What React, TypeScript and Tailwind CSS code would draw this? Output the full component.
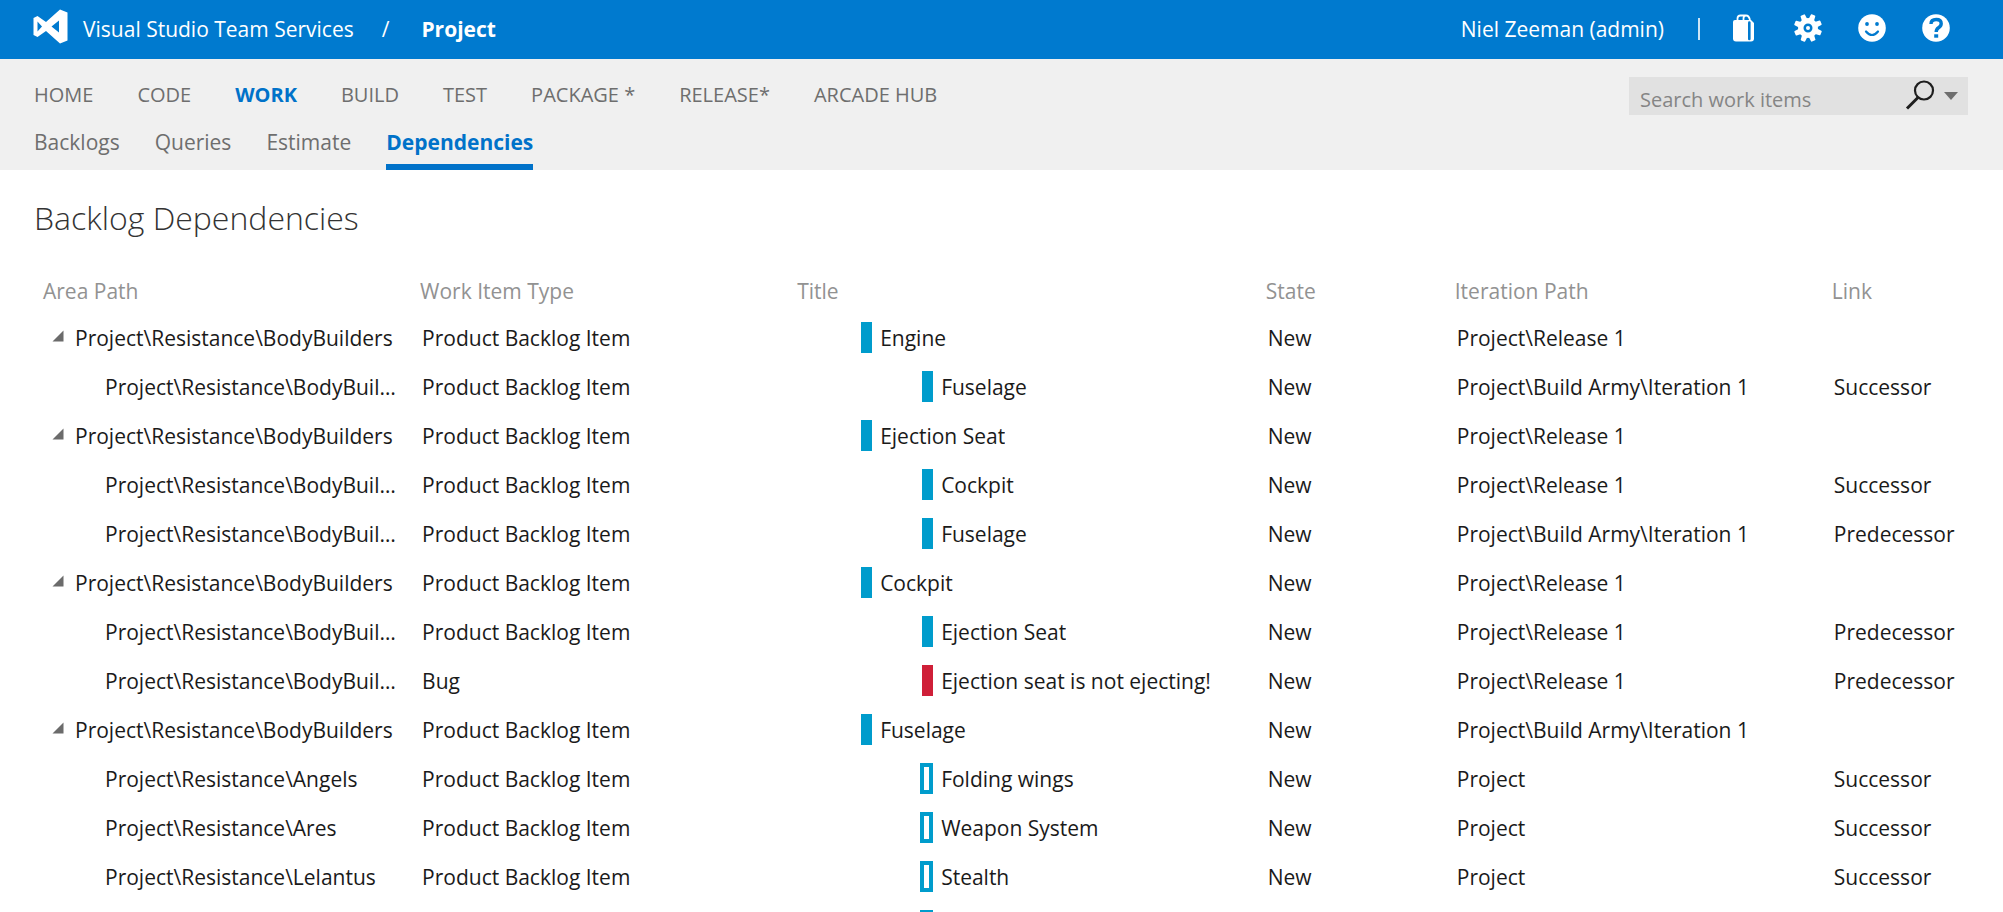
import { useState } from "react";

type Item = {
  area: string;
  type: string;
  title: string;
  iteration: string;
  link?: string;
  marker: "solid" | "bug" | "hollow";
};

type Group = Item & { children: Item[] };

const BODY = "Project\\Resistance\\BodyBuilders";
const PBI = "Product Backlog Item";
const RELEASE = "Project\\Release 1";
const ARMY = "Project\\Build Army\\Iteration 1";

const groups: Group[] = [
  {
    area: BODY, type: PBI, title: "Engine", iteration: RELEASE, marker: "solid",
    children: [
      { area: BODY, type: PBI, title: "Fuselage", iteration: ARMY, link: "Successor", marker: "solid" },
    ],
  },
  {
    area: BODY, type: PBI, title: "Ejection Seat", iteration: RELEASE, marker: "solid",
    children: [
      { area: BODY, type: PBI, title: "Cockpit", iteration: RELEASE, link: "Successor", marker: "solid" },
      { area: BODY, type: PBI, title: "Fuselage", iteration: ARMY, link: "Predecessor", marker: "solid" },
    ],
  },
  {
    area: BODY, type: PBI, title: "Cockpit", iteration: RELEASE, marker: "solid",
    children: [
      { area: BODY, type: PBI, title: "Ejection Seat", iteration: RELEASE, link: "Predecessor", marker: "solid" },
      { area: BODY, type: "Bug", title: "Ejection seat is not ejecting!", iteration: RELEASE, link: "Predecessor", marker: "bug" },
    ],
  },
  {
    area: BODY, type: PBI, title: "Fuselage", iteration: ARMY, marker: "solid",
    children: [
      { area: "Project\\Resistance\\Angels", type: PBI, title: "Folding wings", iteration: "Project", link: "Successor", marker: "hollow" },
      { area: "Project\\Resistance\\Ares", type: PBI, title: "Weapon System", iteration: "Project", link: "Successor", marker: "hollow" },
      { area: "Project\\Resistance\\Lelantus", type: PBI, title: "Stealth", iteration: "Project", link: "Successor", marker: "hollow" },
    ],
  },
];

const hubs = ["HOME", "CODE", "WORK", "BUILD", "TEST", "PACKAGE *", "RELEASE*", "ARCADE HUB"];
const pages = ["Backlogs", "Queries", "Estimate", "Dependencies"];

const markerStyles = {
  solid: "ml-[2px] w-[11px] bg-[#009ccc]",
  bug: "ml-[2px] w-[11px] bg-[#cf1f38]",
  hollow: "w-[13px] border-4 border-[#009ccc]",
};

function Marker({ kind }: { kind: Item["marker"] }) {
  return <span className={`block h-[31px] shrink-0 ${markerStyles[kind]}`} />;
}

function Logo() {
  return (
    <svg viewBox="0 0 35 35" className="h-[35px] w-[35px]" fill="currentColor" aria-hidden="true">
      <path
        fillRule="evenodd"
        d="M27 .5 34.5 3.5V31.500L27 34.500 13 22 4.500 28 .5 26V9L4.500 7 13 13 27 .5ZM26 11.500 18.500 17.500 26 23.500ZM4.500 12.500V22.500L9 17.500Z"
      />
    </svg>
  );
}

function BagIcon() {
  return (
    <svg viewBox="0 0 30 30" className="h-[30px] w-[30px]" aria-hidden="true">
      <path d="M8.500 8V5.500Q8.500 2.500 11.500 2.500H17Q20 2.500 21 7M14.500 8V5.500Q14.500 2.500 17 2.500" fill="none" stroke="currentColor" strokeWidth="1.800" />
      <path d="M6 7H22L25 10V25.500Q25 28.500 22 28.500H7Q4 28.500 4 25.500V9Q4 7 6 7Z" fill="currentColor" />
      <path d="M20.300 9.500V26" stroke="#007acf" strokeWidth="2.600" strokeLinecap="round" />
    </svg>
  );
}

function GearIcon() {
  return (
    <svg viewBox="0 0 30 30" className="h-[30px] w-[30px]" fill="currentColor" aria-hidden="true">
      {[22, 67, 112, 157, 202, 247, 292, 337].map((angle) => (
        <path key={angle} d="M12 8 12.600 1.600Q12.700 .9 13.400 .9H16.600Q17.300 .9 17.400 1.600L18 8Z" transform={`rotate(${angle} 15 15)`} />
      ))}
      <path fillRule="evenodd" d="M15 5A10 10 0 1 0 15 25A10 10 0 1 0 15 5ZM15 10.500A4.500 4.500 0 1 1 15 19.500A4.500 4.500 0 1 1 15 10.500Z" />
      <circle cx="15" cy="15" r="2" />
    </svg>
  );
}

function SmileIcon() {
  return (
    <svg viewBox="0 0 30 30" className="h-[30px] w-[30px]" aria-hidden="true">
      <circle cx="15" cy="15" r="13.800" fill="currentColor" />
      <circle cx="10" cy="11" r="1.900" fill="#007acf" />
      <circle cx="20" cy="11" r="1.900" fill="#007acf" />
      <path d="M9 18.500Q15 25.500 21 18.500" fill="none" stroke="#007acf" strokeWidth="2.200" strokeLinecap="round" />
    </svg>
  );
}

function HelpIcon() {
  return (
    <svg viewBox="0 0 30 30" className="h-[30px] w-[30px]" aria-hidden="true">
      <circle cx="15" cy="15" r="13.800" fill="currentColor" />
      <path d="M10 11Q10 6.500 15.200 6.500Q20.200 6.500 20.200 10.500Q20.200 13 17.500 14.700Q15.200 16.200 15.200 19" fill="none" stroke="#007acf" strokeWidth="3.400" />
      <rect x="13.200" y="21.300" width="4" height="3.400" fill="#007acf" />
    </svg>
  );
}

function ItemRow({ item, child, open, onToggle }: { item: Item; child?: boolean; open?: boolean; onToggle?: () => void }) {
  return (
    <tr className="h-[49px]">
      <td className="p-0">
        <div className={`flex items-center ${child ? "pl-[71px] pr-[5px]" : "pl-[17px]"}`}>
          {!child && (
            <button type="button" aria-label="Toggle dependencies" aria-expanded={open} onClick={onToggle} className="mr-[10px] flex h-[30px] w-[14px] shrink-0 items-center justify-center pb-1">
              <svg viewBox="0 0 12 12" className={open ? "h-3 w-3" : "h-3 w-3 -rotate-45"} aria-hidden="true">
                <path d="M11.500 .5V11.500H.5Z" fill="#6b6b6b" />
              </svg>
            </button>
          )}
          <span className="truncate">{item.area}</span>
        </div>
      </td>
      <td className="truncate p-0 pl-[11px]">{item.type}</td>
      <td className="p-0">
        <div className={`flex items-center ${child ? "pl-[132px]" : "pl-[71px]"}`}>
          <Marker kind={item.marker} />
          <span className="truncate pl-2">{item.title}</span>
        </div>
      </td>
      <td className="p-0 pl-[11px]">New</td>
      <td className="truncate p-0 pl-[11px]">{item.iteration}</td>
      <td className="truncate p-0 pl-[11px]">{item.link}</td>
    </tr>
  );
}

export default function App() {
  const [closed, setClosed] = useState<number[]>([]);
  const toggle = (index: number) =>
    setClosed((list) => (list.includes(index) ? list.filter((n) => n !== index) : [...list, index]));

  return (
    <div className="h-screen overflow-hidden bg-white font-['Open_Sans','Noto_Sans',sans-serif] text-[21px] leading-[30px] text-[#1a1a1a]">
      <header className="flex h-[59px] items-center justify-between bg-[#007acf] pb-[2px] pl-[33px] pr-[52px] text-white">
        <div className="flex items-center">
          <a href="#" aria-label="Start page" className="pb-1"><Logo /></a>
          <a href="#" className="ml-[15px]">Visual Studio Team Services</a>
          <span className="ml-7 mr-8">/</span>
          <a href="#" className="font-bold">Project</a>
        </div>
        <div className="flex items-center">
          <a href="#">Niel Zeeman (admin)</a>
          <span className="ml-[34px] mr-[29px] h-[22px] w-[2px] bg-white/80" />
          <div className="flex items-center gap-[34px] pb-[2px]">
            <button type="button" aria-label="Marketplace"><BagIcon /></button>
            <button type="button" aria-label="Settings"><GearIcon /></button>
            <button type="button" aria-label="Feedback"><SmileIcon /></button>
            <button type="button" aria-label="Help"><HelpIcon /></button>
          </div>
        </div>
      </header>

      <div className="flex h-[111px] items-start justify-between bg-[#f0f0f0] pl-[34px] pr-[35px] text-[#6e6e6e]">
        <div>
          <nav aria-label="Hubs" className="flex gap-[44px] pt-[21px] text-[20px]">
            {hubs.map((hub) => (
              <a key={hub} href="#" className={hub === "WORK" ? "font-bold text-[#0072c9]" : ""}>{hub}</a>
            ))}
          </nav>
          <nav aria-label="Work pages" className="flex gap-[35px] pt-[17px]">
            {pages.map((page) => (
              <a
                key={page}
                href="#"
                className={`h-[43px] ${page === "Dependencies" ? "border-b-[6px] border-[#0072c9] font-bold text-[#0072c9]" : ""}`}
              >
                {page}
              </a>
            ))}
          </nav>
        </div>
        <form role="search" onSubmit={(event) => event.preventDefault()} className="mt-[18px] flex h-[38px] w-[339px] items-center bg-[#e1e1e1]">
          <input type="text" aria-label="Search work items" placeholder="Search work items" className="min-w-0 flex-1 bg-transparent pl-[11px] pt-[7px] text-[20px] outline-none placeholder:text-[#858585]" />
          <button type="submit" aria-label="Search" className="pb-[2px]">
            <svg viewBox="0 0 30 30" className="h-[30px] w-[30px]" fill="none" stroke="#1e1e1e" aria-hidden="true">
              <circle cx="19" cy="10.500" r="9" strokeWidth="2.200" />
              <path d="M13 17.500 2 28.500" strokeWidth="3" />
            </svg>
          </button>
          <button type="button" aria-label="Search options" className="ml-[9px] mr-[10px]">
            <svg viewBox="0 0 14 8" className="h-2 w-[14px]" aria-hidden="true"><path d="M0 0H14L7 8Z" fill="#6e6e6e" /></svg>
          </button>
        </form>
      </div>

      <main className="pl-[34px]">
        <h1 className="pb-[30px] pt-[25px] text-[32px] font-light leading-[46px] text-[#333]">Backlog Dependencies</h1>
        <table className="w-full table-fixed border-collapse text-left">
          <colgroup>
            <col className="w-[19.15%]" />
            <col className="w-[19.15%]" />
            <col className="w-[23.8%]" />
            <col className="w-[9.6%]" />
            <col className="w-[19.15%]" />
            <col />
          </colgroup>
          <thead>
            <tr className="h-[42px] text-[#929292]">
              {["Area Path", "Work Item Type", "Title", "State", "Iteration Path", "Link"].map((name) => (
                <th key={name} scope="col" className="p-0 pb-[2px] pl-[9px] font-normal">{name}</th>
              ))}
            </tr>
          </thead>
          <tbody>
            {groups.map((group, index) => {
              const open = !closed.includes(index);
              return [
                <ItemRow key={index} item={group} open={open} onToggle={() => toggle(index)} />,
                ...(open ? group.children.map((item, n) => <ItemRow key={`${index}-${n}`} item={item} child />) : []),
              ];
            })}
            <tr className="h-[49px]">
              <td className="p-0" colSpan={2} />
              <td className="p-0 pl-[132px]"><Marker kind="hollow" /></td>
              <td className="p-0" colSpan={3} />
            </tr>
          </tbody>
        </table>
      </main>
    </div>
  );
}
